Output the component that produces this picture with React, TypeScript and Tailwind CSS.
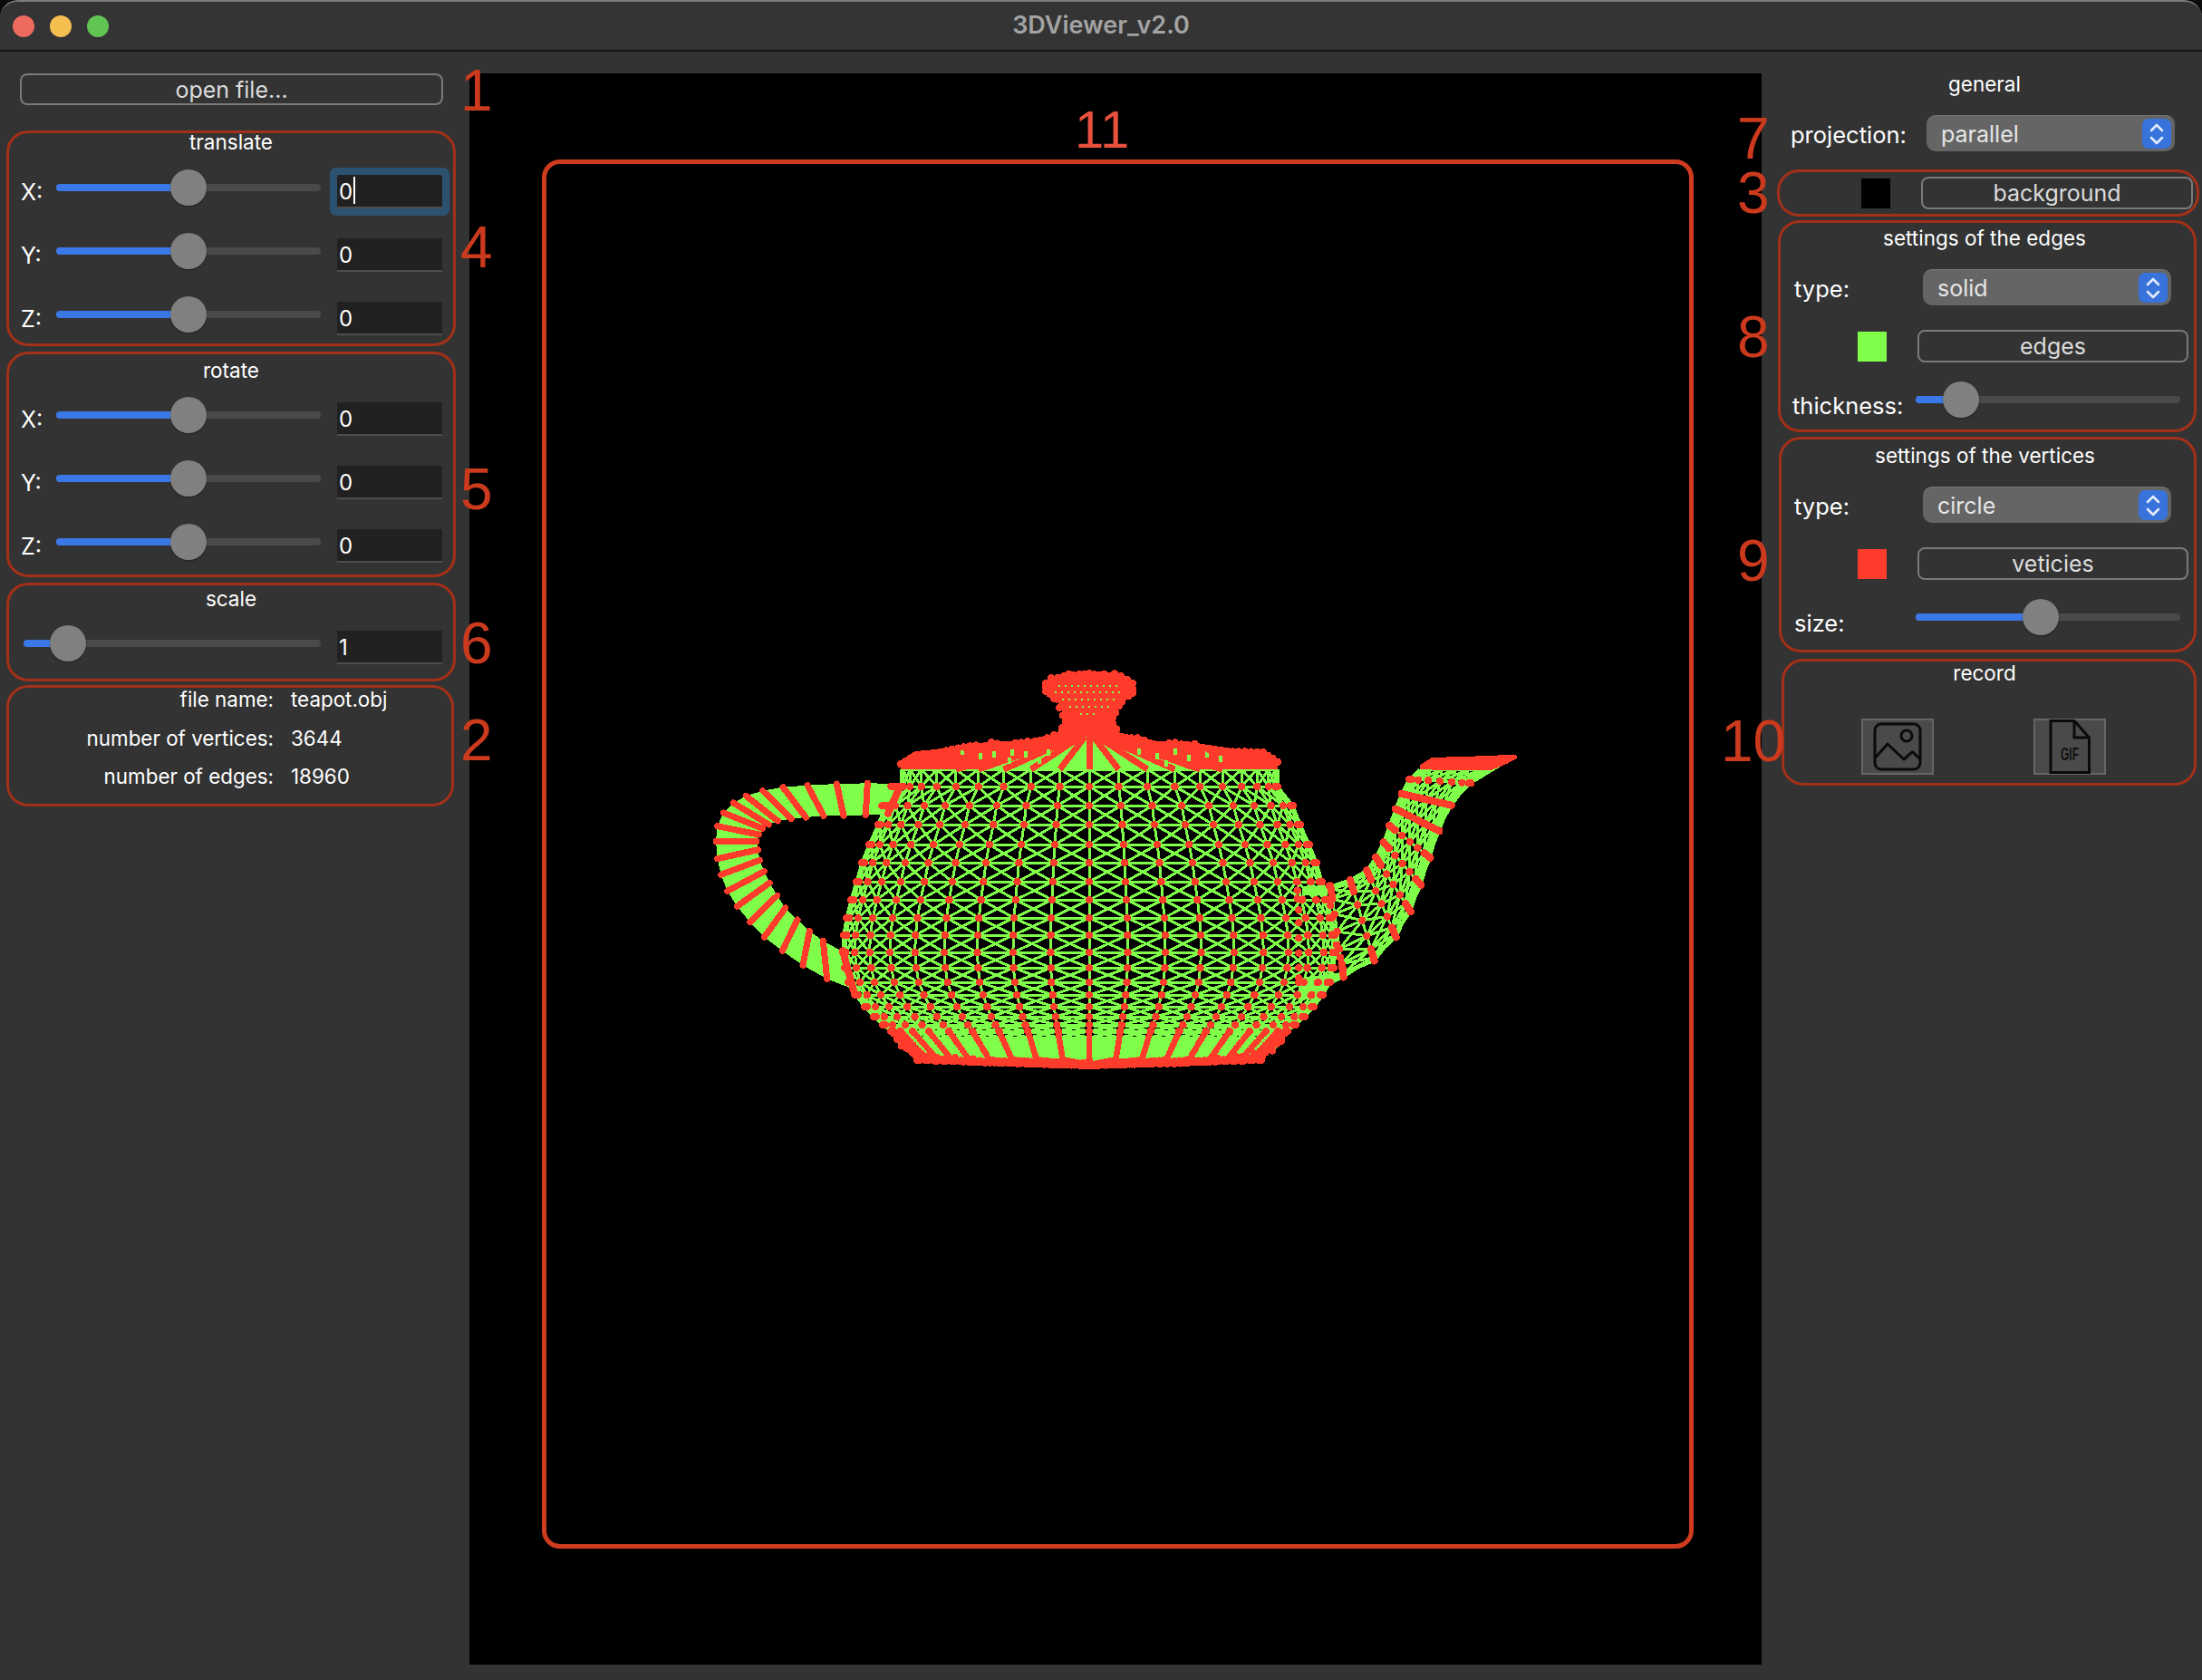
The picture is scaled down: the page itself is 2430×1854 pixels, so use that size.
import React from "react";

const GREEN = "#80ff4a";
const RED = "#ff3b2b";
const CX = 1202;
const z5x = (v: number) => 760 + v / 3;
const z5y = (v: number) => 720 + v / 3;
const z6x = (v: number) => 1200 + v / 3;
const z6y = (v: number) => 800 + v / 3;

type Pt = [number, number];
const thetas: number[] = [];
for (let a = -90; a <= 90; a += 9) thetas.push((a * Math.PI) / 180);
const rowsV: Pt[] = [
  [848, 208], [867, 208], [888, 225], [909, 233], [931, 243], [951, 251], [972, 257], [992, 263],
  [1012, 268], [1031, 271], [1050, 272], [1067, 270], [1083, 266], [1097, 258], [1110, 248],
  [1121, 238], [1130, 228], [1137, 219], [1144, 214], [1150, 209],
];
const ringPt = (y: number, r: number, t: number): Pt => [CX + r * Math.sin(t), y];
const seg = (a: Pt, b: Pt) => `M${a[0].toFixed(1)} ${a[1].toFixed(1)}L${b[0].toFixed(1)} ${b[1].toFixed(1)}`;

let bodyWires = "";
const bodyDots: Pt[] = [];
const spokeDots: Pt[] = [];
rowsV.forEach(([y, r], i) => {
  thetas.forEach((t, j) => {
    const p = ringPt(y, r, t);
    if (i > 0 && i < 18) bodyDots.push(p);
    if (j < thetas.length - 1) {
      bodyWires += seg(p, ringPt(y, r, thetas[j + 1]));
      if (i < rowsV.length - 1) {
        const [y2, r2] = rowsV[i + 1];
        bodyWires += seg(p, ringPt(y2, r2, thetas[j + 1]));
        bodyWires += seg(ringPt(y, r, thetas[j + 1]), ringPt(y2, r2, t));
      }
    }
    if (i < rowsV.length - 1) {
      const [y2, r2] = rowsV[i + 1];
      bodyWires += seg(p, ringPt(y2, r2, t));
    }
  });
});
// lower spokes and floor
for (let k = 1; k <= 10; k++) {
  const y = 1137 + k * 3;
  const r = 219 - k * 3;
  thetas.forEach((t) => spokeDots.push(ringPt(y, r, t)));
}
for (let r = 190; r >= 0; r -= 10) {
  const y = 1175 - (r / 190) * 6;
  thetas.forEach((t) => bodyDots.push(ringPt(y, r, t)));
}
const mirror = (pts: Pt[]): string => {
  const right = pts.map(([r, y]) => `${CX + r},${y}`);
  const left = [...pts].reverse().map(([r, y]) => `${CX - r},${y}`);
  return [...right, ...left].join(" ");
};
const bottomProfile: Pt[] = [
  [0, 1176], [108, 1174], [175, 1168], [202, 1160], [212, 1150], [214, 1146],
];
const bottomFill = mirror(bottomProfile);
const lidTop: Pt[] = [
  [30, 800], [32, 807], [75, 817], [108, 817], [125, 820], [158, 825], [192, 828], [208, 838], [208, 848],
];
const lidFill = mirror([...lidTop, [0, 848]]);
const lidRed = mirror([
  [30, 800], [32, 807], [75, 817], [108, 817], [125, 820], [158, 825], [192, 828], [208, 838], [208, 848],
  [110, 848], [75, 834], [42, 822], [25, 812],
]);
const knobProfile: Pt[] = [
  [0, 741], [28, 742], [42, 746], [48, 751], [48, 761], [39, 767], [36, 770], [33, 777], [29, 785], [26, 790], [25, 812],
];
const knob = mirror([...knobProfile, [0, 812]]);
const lidSpokes = [-45, -36, -27, -18, -9, 0, 9, 18, 27, 36, 45].map((d) => {
  const t = (d * Math.PI) / 180;
  return seg(ringPt(812, 30, t), ringPt(848, 208, t));
});
const specks: Pt[] = [];
([[755, 34], [762, 38], [770, 30], [778, 22], [786, 10]] as Pt[]).forEach(([y, r]) => {
  for (let x = -r; x <= r; x += 7) specks.push([CX + x, y]);
});
const lidGreen: Pt[] = [
  [1060, 825], [1080, 830], [1095, 828], [1112, 835], [1130, 828], [1145, 835], [1115, 826], [1155, 826],
  [1255, 825], [1275, 830], [1295, 825], [1310, 832], [1285, 838], [1330, 828], [1345, 833],
];
// bumpy outline dots around the dense parts of the model
const edgeDots: Pt[] = [];
const walk = (prof: Pt[], step: number, inset: number) => {
  for (let i = 0; i < prof.length - 1; i++) {
    const [r1, y1] = prof[i];
    const [r2, y2] = prof[i + 1];
    const len = Math.hypot(r2 - r1, y2 - y1);
    const n = Math.max(1, Math.round(len / step));
    for (let k = 0; k < n; k++) {
      const r = r1 + ((r2 - r1) * k) / n;
      const y = y1 + ((y2 - y1) * k) / n;
      const jitter = Math.sin(r * 1.7 + y) * 1.6;
      edgeDots.push([CX + r, y + inset + jitter]);
      edgeDots.push([CX - r, y + inset - jitter]);
    }
  }
};
walk(lidTop, 7, 3);
walk(knobProfile, 6, 2);
walk(bottomProfile, 7, -3);

// handle
const handleRods: [Pt, Pt][] = [
  [[592, 430], [586, 535]],
  [[490, 432], [513, 538]],
  [[393, 437], [447, 538]],
  [[312, 443], [388, 543]],
  [[245, 455], [340, 548]],
  [[190, 472], [295, 555]],
  [[148, 495], [265, 567]],
  [[115, 528], [245, 580]],
  [[95, 572], [232, 600]],
  [[90, 622], [225, 622]],
  [[95, 680], [230, 650]],
  [[107, 733], [235, 685]],
  [[128, 787], [250, 722]],
  [[160, 838], [268, 760]],
  [[203, 890], [293, 802]],
  [[250, 940], [320, 843]],
  [[310, 985], [360, 882]],
  [[378, 1033], [400, 920]],
  [[458, 1078], [445, 952]],
];
const conv5 = (p: Pt): Pt => [z5x(p[0]), z5y(p[1])];
const handlePoly = [
  [720, 432] as Pt,
  ...handleRods.map((r) => r[0]),
  [535, 1108] as Pt,
  [505, 985] as Pt,
  ...[...handleRods].reverse().map((r) => r[1]),
  [640, 535] as Pt,
]
  .map((p) => conv5(p).join(","))
  .join(" ");
const handleRodPath = handleRods.map((r) => seg(conv5(r[0]), conv5(r[1]))).join("");
const handleEnd = [
  [[700, 440], [660, 530]],
  [[670, 440], [700, 440]],
  [[640, 505], [680, 505]],
  [[510, 985], [550, 1130]],
] as [Pt, Pt][];

// spout
const spoutRods: [Pt, Pt][] = [
  [[1100, 145], [1335, 145]],
  [[1065, 177], [1270, 190]],
  [[1040, 225], [1205, 263]],
  [[1020, 275], [1165, 348]],
  [[1000, 330], [1135, 437]],
  [[980, 385], [1105, 527]],
  [[955, 435], [1070, 615]],
  [[925, 478], [1022, 700]],
  [[870, 510], [950, 778]],
  [[805, 530], [848, 832]],
];
const conv6 = (p: Pt): Pt => [z6x(p[0]), z6y(p[1])];
const rodAt = (r: [Pt, Pt], k: number): Pt => {
  const t = (1 - Math.cos((k * Math.PI) / 8)) / 2;
  return conv6([r[0][0] + (r[1][0] - r[0][0]) * t, r[0][1] + (r[1][1] - r[0][1]) * t]);
};
let spoutWires = "";
const spoutFill: string[] = [];
const spoutDots: Pt[] = [];
let spoutRed = "";
spoutRods.forEach((r, i) => {
  for (let k = 0; k <= 8; k++) {
    if (i > 0) spoutDots.push(rodAt(r, k));
    if (k < 8) {
      spoutWires += seg(rodAt(r, k), rodAt(r, k + 1));
      if (i < spoutRods.length - 1) {
        const n = spoutRods[i + 1];
        spoutWires += seg(rodAt(r, k), rodAt(n, k));
        spoutWires += seg(rodAt(r, k), rodAt(n, k + 1));
        spoutWires += seg(rodAt(r, k + 1), rodAt(n, k));
        if (k === 0 || k === 7 || (i < 6 && (k === 1 || k === 6))) {
          spoutFill.push([rodAt(r, k), rodAt(r, k + 1), rodAt(n, k + 1), rodAt(n, k)].map((p) => p.join(",")).join(" "));
        }
      }
    }
  }
  if (i >= 2 && i <= 3) spoutRed += seg(rodAt(r, 0), rodAt(r, 8));
  else if (i > 3) spoutRed += seg(rodAt(r, 0), rodAt(r, 2)) + seg(rodAt(r, 6), rodAt(r, 8));
});
const spoutTop = ([[1100, 145], [1100, 130], [1140, 105], [1300, 100], [1420, 95], [1422, 108], [1390, 125], [1335, 148]] as Pt[])
  .map((p) => conv6(p).join(","))
  .join(" ");
const spoutTip = ([[1335, 145], [1420, 105], [1340, 152], [1270, 195], [1200, 195]] as Pt[])
  .map((p) => conv6(p).join(","))
  .join(" ");
const junctionDots: Pt[] = ([
  [695, 517], [740, 515], [775, 515], [800, 530], [695, 545], [695, 572], [712, 575], [758, 577], [790, 575], [805, 595],
  [700, 610], [722, 635], [770, 635], [805, 635], [700, 652], [700, 703], [730, 693], [780, 693], [815, 690], [825, 725],
  [700, 752], [732, 750], [782, 750], [815, 750], [838, 768], [700, 800], [728, 802], [776, 802], [815, 802], [845, 803],
  [700, 835], [700, 850], [762, 850], [795, 850], [695, 890], [740, 892], [772, 890],
] as Pt[]).map(conv6);
const junctionGreen = ([[712, 532], [800, 530], [795, 560], [712, 560]] as Pt[]).map((p) => conv6(p).join(",")).join(" ");
const junctionGreen2 = ([[700, 835], [850, 815], [860, 830], [795, 862], [770, 900], [700, 905]] as Pt[]).map((p) => conv6(p).join(",")).join(" ");

function Teapot() {
  return (
    <svg className="absolute inset-0 h-full w-full" viewBox="518 80 1426 1756" shapeRendering="crispEdges">
      <polygon points={handlePoly} fill={GREEN} />
      <path d={handleRodPath} stroke={RED} strokeWidth={7} strokeLinecap="round" fill="none" />
      <polygon points={lidFill} fill={GREEN} />
      <polygon points={bottomFill} fill={GREEN} />
      <path d={bodyWires} stroke={GREEN} strokeWidth={3} fill="none" />
      <polygon points={spoutTip} fill={GREEN} />
      {spoutFill.map((p, i) => (
        <polygon key={i} points={p} fill={GREEN} />
      ))}
      <path d={spoutWires} stroke={GREEN} strokeWidth={3} fill="none" />
      <polygon points={junctionGreen} fill={GREEN} />
      <polygon points={junctionGreen2} fill={GREEN} />
      <path d={handleEnd.map((r) => seg(conv5(r[0]), conv5(r[1]))).join("")} stroke={RED} strokeWidth={8} strokeLinecap="round" fill="none" />
      <path d={spoutRed} stroke={RED} strokeWidth={8} strokeLinecap="round" fill="none" />
      <polygon points={spoutTop} fill={RED} />
      <polygon points={lidRed} fill={RED} />
      <path d={lidSpokes.join("")} stroke={RED} strokeWidth={7} fill="none" />
      <polygon points={knob} fill={RED} />
      {lidGreen.map((p, i) => (
        <rect key={i} x={p[0]} y={p[1]} width={4} height={7} fill={GREEN} />
      ))}
      {specks.map((p, i) => (
        <rect key={i} x={p[0]} y={p[1]} width={2} height={2} fill={GREEN} />
      ))}
      {spokeDots.map((p, i) => (
        <circle key={i} cx={p[0]} cy={p[1]} r={3.4} fill={RED} />
      ))}
      {[...bodyDots, ...spoutDots, ...junctionDots, ...edgeDots].map((p, i) => (
        <circle key={i} cx={p[0]} cy={p[1]} r={4.2} fill={RED} />
      ))}
    </svg>
  );
}

function Slider({ width, pos }: { width: number; pos: number }) {
  return (
    <div className="relative h-2 shrink-0 rounded-full bg-[#4a4a4a]" style={{ width }}>
      <div className="h-2 rounded-l-full bg-[#3b78e7]" style={{ width: pos }} />
      <div
        className="absolute top-[-16px] h-10 w-10 rounded-full bg-[#808080] shadow-[0_1px_2px_rgba(0,0,0,0.4)]"
        style={{ left: pos - 20 }}
      />
    </div>
  );
}

function ValueBox({ value, focus }: { value: string; focus?: boolean }) {
  return (
    <div
      className={
        "ml-[18px] flex h-[37px] w-[116px] items-center border-b-2 border-[#4d4d4d] bg-[#212121] pl-[2px] text-[24px] text-white" +
        (focus ? " rounded-[2px] ring-[8px] ring-[#2c5270]" : "")
      }
    >
      <span className="pt-[3px]">{value}</span>
      {focus ? <span className="ml-[1px] h-[30px] w-[2px] bg-white" /> : null}
    </div>
  );
}

function AxisRow({ label, value, focus }: { label: string; value: string; focus?: boolean }) {
  return (
    <div className="flex h-[44px] items-center pl-[13px]">
      <div className="w-[39px] pt-[3px] text-[25px] text-white">{label}</div>
      <div className="mb-2">
        <Slider width={292} pos={146} />
      </div>
      <ValueBox value={value} focus={focus} />
    </div>
  );
}

function Title({ children, cls = "" }: { children: React.ReactNode; cls?: string }) {
  return <div className={"h-5 text-center text-[22.5px] leading-5 text-white " + cls}>{children}</div>;
}

function OutlineButton({ label, cls }: { label: string; cls: string }) {
  return (
    <div className={"flex items-center justify-center rounded-[8px] border-2 border-[#7a7a7a] text-[25px] leading-[30px] text-[#dcdcdc] " + cls}>
      {label}
    </div>
  );
}

function SelectBox({ label, cls }: { label: string; cls: string }) {
  return (
    <div className={"flex h-10 items-center justify-between rounded-[10px] border-t border-[#767676] bg-[#656565] pl-4 pr-1 text-[25px] leading-[30px] text-[#e6e6e6] " + cls}>
      <span>{label}</span>
      <span className="flex h-[33px] w-8 items-center justify-center rounded-[7px] bg-[#3873dc]">
        <svg width="18" height="26" viewBox="0 0 18 26" fill="none" stroke="#e3ecfb" strokeWidth="2.6" strokeLinecap="round" strokeLinejoin="round">
          <path d="M3 9 9 3l6 6" />
          <path d="M3 17l6 6 6-6" />
        </svg>
      </span>
    </div>
  );
}

const cardCls = "rounded-[24px] border-[3px] border-[#a33018] box-border";
const labelCls = "pt-1 text-[25.5px] leading-[32px] text-white whitespace-nowrap";

function Num({ n, cls }: { n: string; cls: string }) {
  return <div className={"absolute font-['Liberation_Sans'] leading-none text-[#cc3a1e] " + cls}>{n}</div>;
}

export default function App() {
  return (
    <div className="relative h-[1854px] w-[2430px] overflow-hidden bg-[#0c0c0c] font-['Inter',sans-serif]">
      <div className="flex h-full flex-col overflow-hidden rounded-t-[20px] border-t-2 border-[#7c7c7c] bg-[#333333]">
        {/* title bar */}
        <div className="relative flex h-[55px] shrink-0 items-center justify-center border-b-2 border-[#161616] bg-[#343434]">
          <div className="absolute left-[14px] flex gap-[17px]">
            <span className="h-6 w-6 rounded-full bg-[#ed6a5f]" />
            <span className="h-6 w-6 rounded-full bg-[#f4bf4f]" />
            <span className="h-6 w-6 rounded-full bg-[#61c554]" />
          </div>
          <div className="text-[27px] font-semibold text-[#a3a3a3]">3DViewer_v2.0</div>
        </div>

        <div className="flex flex-1">
          {/* left column */}
          <div className="flex w-[518px] shrink-0 flex-col pt-[24px]">
            <OutlineButton label="open file..." cls="ml-[22px] h-[35px] w-[467px]" />

            <div className={"ml-[7px] mt-[28px] h-[238px] w-[496px] " + cardCls}>
              <Title>translate</Title>
              <div className="mt-[22px] flex flex-col gap-[26px]">
                <AxisRow label="X:" value="0" focus />
                <AxisRow label="Y:" value="0" />
                <AxisRow label="Z:" value="0" />
              </div>
            </div>

            <div className={"ml-[7px] mt-[6px] h-[249px] w-[496px] pt-[8px] " + cardCls}>
              <Title>rotate</Title>
              <div className="mt-[21px] flex flex-col gap-[26px]">
                <AxisRow label="X:" value="0" />
                <AxisRow label="Y:" value="0" />
                <AxisRow label="Z:" value="0" />
              </div>
            </div>

            <div className={"ml-[7px] mt-[6px] h-[109px] w-[496px] pt-[5px] " + cardCls}>
              <Title>scale</Title>
              <div className="mt-[21px] flex h-[44px] items-center pl-[16px]">
                <div className="mb-2">
                  <Slider width={328} pos={49} />
                </div>
                <ValueBox value="1" />
              </div>
            </div>

            <div className={"ml-[7px] mt-[4px] flex h-[134px] w-[494px] flex-col gap-[16.5px] text-[22.4px] leading-[26px] text-white " + cardCls}>
              {[
                ["file name:", "teapot.obj"],
                ["number of vertices:", "3644"],
                ["number of edges:", "18960"],
              ].map(([a, b]) => (
                <div key={a} className="flex">
                  <div className="w-[292px] text-right">{a}</div>
                  <div className="ml-[19px]">{b}</div>
                </div>
              ))}
            </div>
          </div>

          {/* canvas */}
          <div className="relative mt-[24px] h-[1756px] w-[1426px] shrink-0 bg-black">
            <Teapot />
            <div className="absolute left-[80px] top-[95px] h-[1533px] w-[1271px] rounded-[20px] border-[5px] border-[#cf3b1f]" />
          </div>

          {/* right column */}
          <div className="flex w-[486px] shrink-0 flex-col pt-[26px]">
            <div className="ml-[6px]">
              <Title>general</Title>
            </div>
            <div className="ml-[32px] mt-[24px] flex items-center">
              <div className={"w-[150px] " + labelCls}>projection:</div>
              <SelectBox label="parallel" cls="w-[274px]" />
            </div>

            <div className={"ml-[17px] mt-[20px] flex h-[52px] w-[466px] items-center " + cardCls}>
              <div className="ml-[90px] h-[33px] w-8 bg-black" />
              <OutlineButton label="background" cls="ml-[34px] h-[36px] w-[300px]" />
            </div>

            <div className={"ml-[18px] mt-[4px] h-[234px] w-[462px] pt-[7px] " + cardCls}>
              <Title cls="pr-[6px]">settings of the edges</Title>
              <div className="mt-[24px] flex items-center pl-[15px]">
                <div className={"w-[142px] " + labelCls}>type:</div>
                <SelectBox label="solid" cls="w-[274px]" />
              </div>
              <div className="mt-[27px] flex items-center">
                <div className="ml-[85px] h-[33px] w-8 bg-[#80ff4a]" />
                <OutlineButton label="edges" cls="ml-[34px] h-[36px] w-[299px]" />
              </div>
              <div className="mt-[26px] flex h-10 items-center pl-[13px]">
                <div className={"w-[136px] " + labelCls}>thickness:</div>
                <div className="mb-[10px]">
                  <Slider width={292} pos={50} />
                </div>
              </div>
            </div>

            <div className={"ml-[19px] mt-[5px] h-[238px] w-[461px] pt-[8px] " + cardCls}>
              <Title cls="pr-[6px]">settings of the vertices</Title>
              <div className="mt-[24px] flex items-center pl-[14px]">
                <div className={"w-[142px] " + labelCls}>type:</div>
                <SelectBox label="circle" cls="w-[274px]" />
              </div>
              <div className="mt-[27px] flex items-center">
                <div className="ml-[84px] h-[33px] w-8 bg-[#ff3b2b]" />
                <OutlineButton label="veticies" cls="ml-[34px] h-[36px] w-[299px]" />
              </div>
              <div className="mt-[26px] flex h-10 items-center pl-[14px]">
                <div className={"w-[134px] " + labelCls}>size:</div>
                <div className="mb-[10px]">
                  <Slider width={292} pos={138} />
                </div>
              </div>
            </div>

            <div className={"ml-[22px] mt-[7px] h-[140px] w-[458px] pt-[3px] " + cardCls}>
              <Title cls="pr-[10px]">record</Title>
              <div className="ml-[85px] mt-[40px] flex gap-[110px]">
                <div className="flex h-[62px] w-20 items-center justify-center border-2 border-[#666666] bg-[#4a4a4a]">
                  <svg width="54" height="54" viewBox="0 0 54 54" fill="none" stroke="#0a0a0a" strokeWidth="3" strokeLinejoin="round">
                    <rect x="2" y="2" width="50" height="50" rx="7" />
                    <circle cx="37" cy="15" r="6" />
                    <path d="M2 39.7 16 24l18 17 9.5-8.3L52 40.7" />
                  </svg>
                </div>
                <div className="flex h-[62px] w-20 items-center justify-center border-2 border-[#666666] bg-[#4a4a4a]">
                  <svg width="46" height="60" viewBox="0 0 46 60" fill="none" stroke="#0a0a0a" strokeWidth="3" strokeLinejoin="miter">
                    <path d="M2 1.5h26L44.500 20v38.500H2Z" />
                    <path d="M28 1.500V20h16.500" />
                    <text x="23" y="45" fontSize="20" textLength="20" lengthAdjust="spacingAndGlyphs" textAnchor="middle" fill="#111111" stroke="none" fontFamily="'Liberation Sans'" fontWeight="700">GIF</text>
                  </svg>
                </div>
              </div>
            </div>
          </div>
        </div>
      </div>

      <Num n="1" cls="left-[508px] top-[68px] text-[64px]" />
      <Num n="4" cls="left-[508px] top-[241px] text-[64px]" />
      <Num n="5" cls="left-[508px] top-[508px] text-[64px]" />
      <Num n="6" cls="left-[508px] top-[678px] text-[64px]" />
      <Num n="2" cls="left-[508px] top-[785px] text-[64px]" />
      <Num n="11" cls="left-[1186px] top-[114px] text-[58px] text-[#e9503e]" />
      <Num n="7" cls="left-[1917px] top-[121px] text-[64px]" />
      <Num n="3" cls="left-[1917px] top-[181px] text-[64px]" />
      <Num n="8" cls="left-[1917px] top-[340px] text-[64px]" />
      <Num n="9" cls="left-[1917px] top-[587px] text-[64px]" />
      <Num n="10" cls="left-[1899px] top-[786px] text-[64px]" />
    </div>
  );
}
